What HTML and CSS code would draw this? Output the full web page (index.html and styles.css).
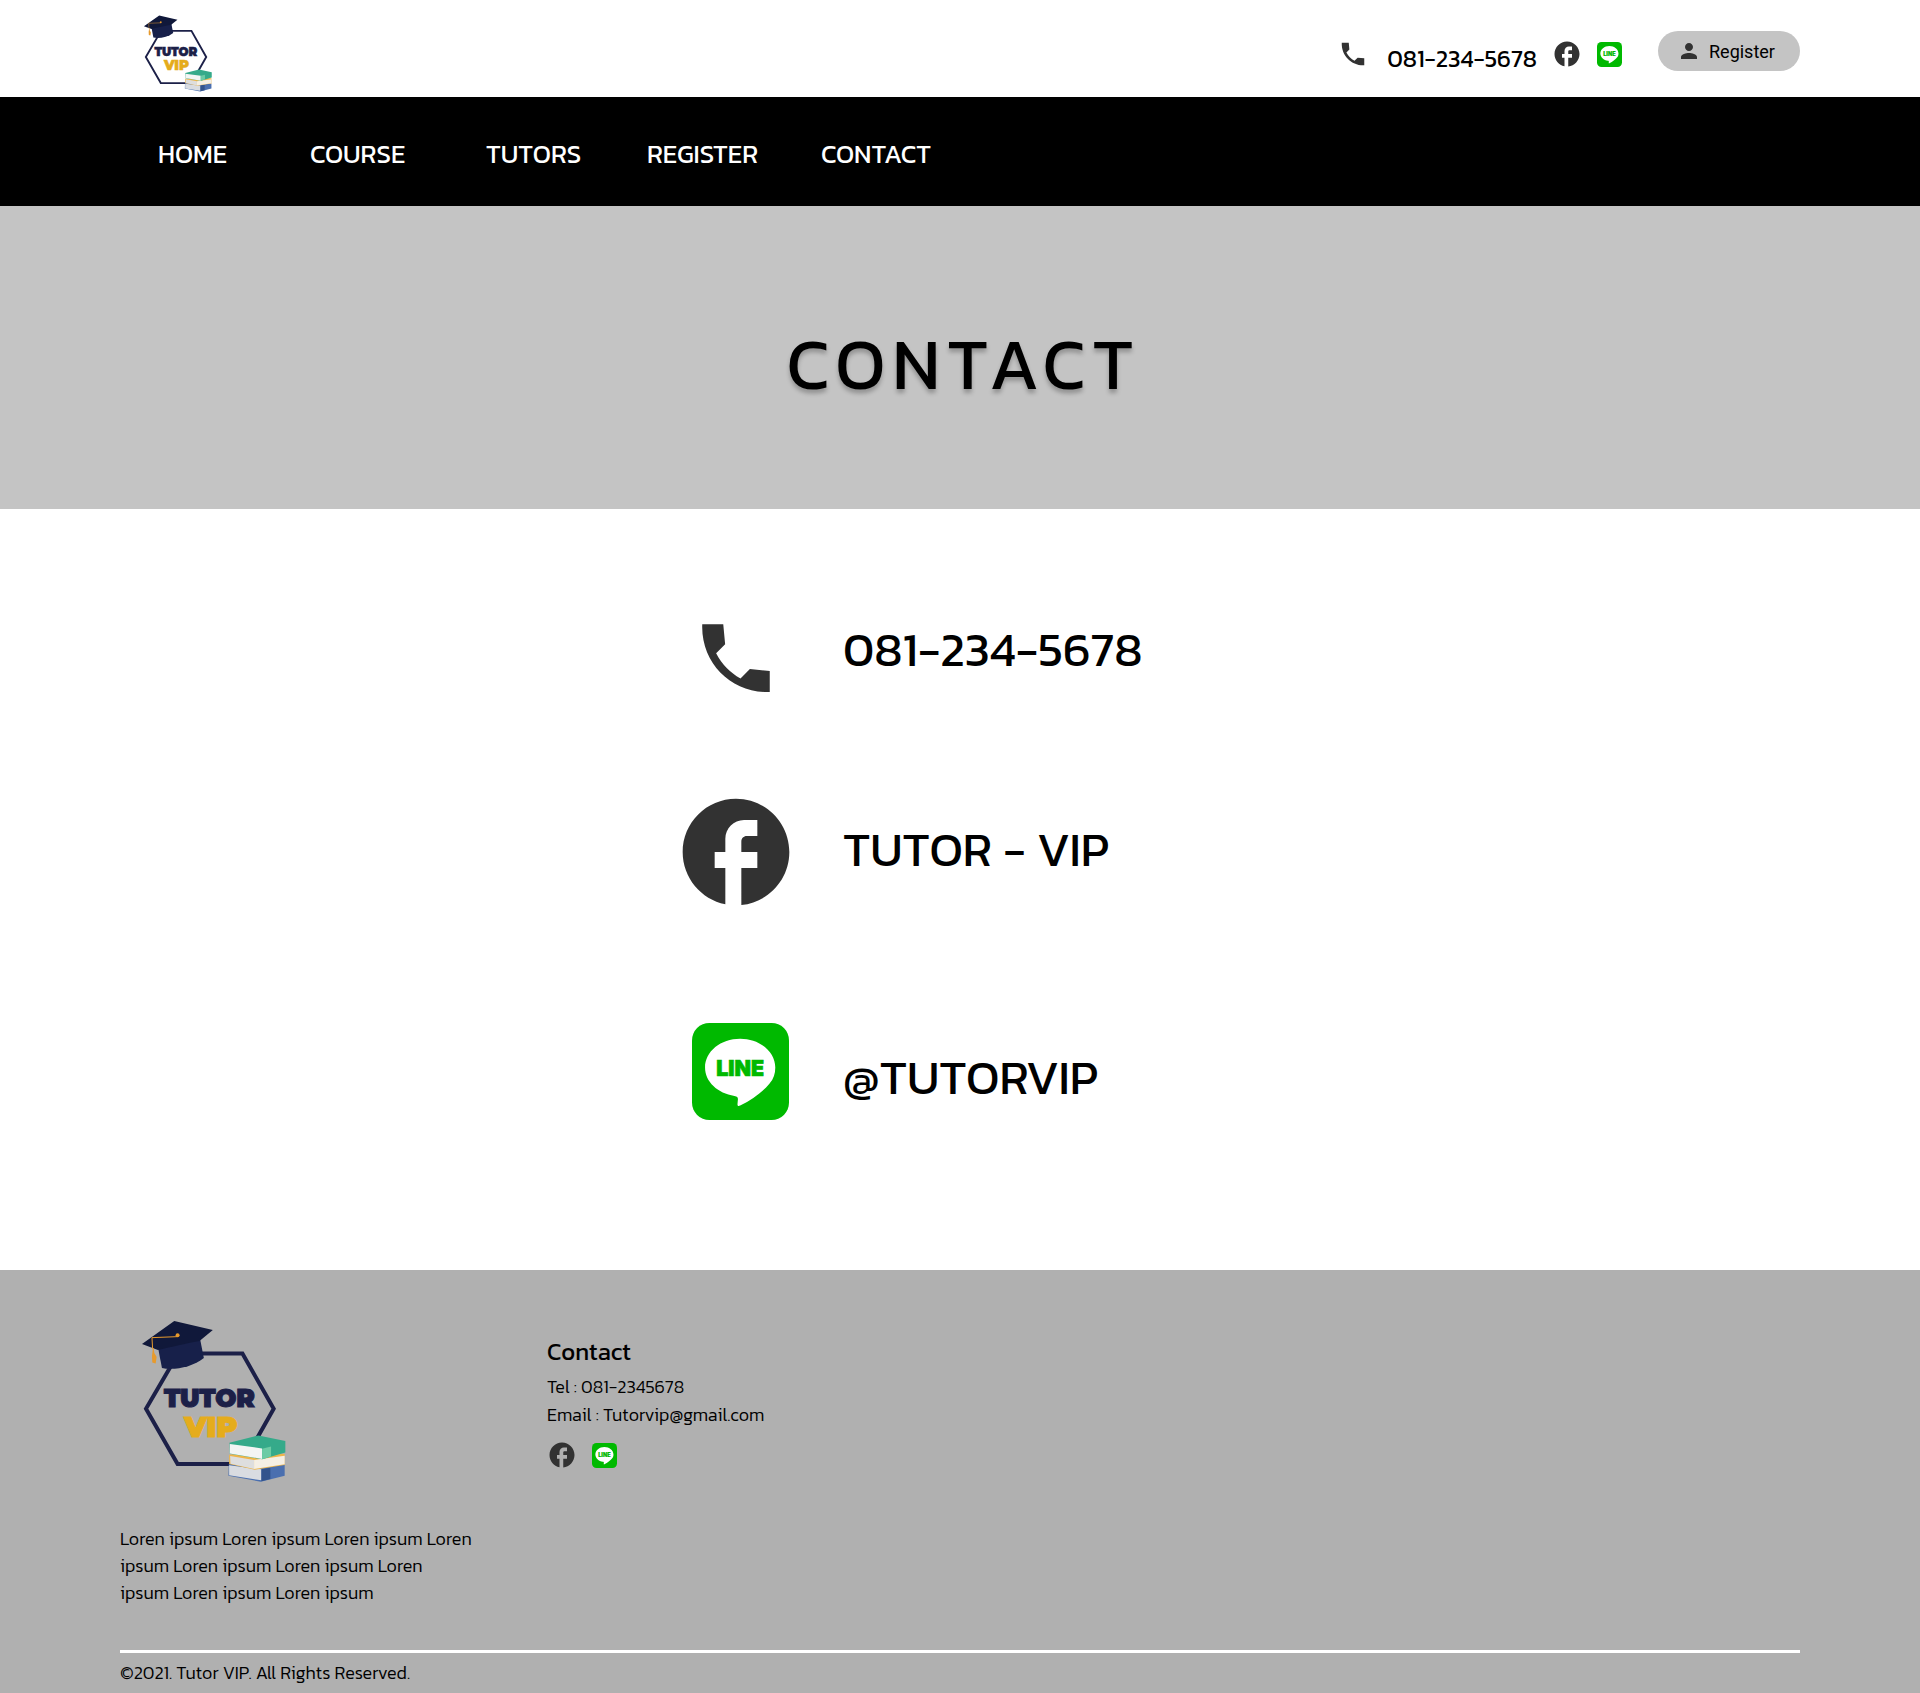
FILE: index.html
```html
<!DOCTYPE html>
<html lang="en">
<head>
<meta charset="utf-8">
<meta name="viewport" content="width=device-width, initial-scale=1">
<title>Tutor VIP - Contact</title>
<link rel="stylesheet" href="styles.css">
</head>
<body>
<svg class="sprite" aria-hidden="true">
  <symbol id="phone" viewBox="0 0 24 24">
    <path d="M3 3h5.600l.5 5.350-2.400 2.400c1.500 2.900 3.700 5.200 6.500 6.700l2.500-2.500 5.300.5v5.600C11 21.500 2.600 13.500 3 3z"/>
  </symbol>
  <symbol id="facebook" viewBox="0 0 24 24">
    <path d="M22 12c0-5.520-4.480-10-10-10S2 6.480 2 12c0 4.840 3.440 8.870 8 9.800V15H8v-3h2V9.500C10 7.570 11.570 6 13.500 6H16v3h-2c-.55 0-1 .45-1 1v2h3v3h-3v6.950c5.050-.5 9-4.760 9-9.950z"/>
  </symbol>
  <symbol id="person" viewBox="0 0 24 24">
    <path d="M12 12c2.210 0 4-1.790 4-4s-1.790-4-4-4-4 1.790-4 4 1.790 4 4 4zm0 2c-2.670 0-8 1.340-8 4v2h16v-2c0-2.660-5.330-4-8-4z"/>
  </symbol>
  <symbol id="line" viewBox="0 0 290 290">
    <rect width="290" height="290" rx="52" fill="#00b900"/>
    <path d="M144 47C86 47 39 85 39 133c0 43 38 77 88 85 10 2 11 5 10 13l-1 12c0 5 2 7 8 4 38-19 68-42 88-66 12-14 17-30 17-48 0-48-47-86-105-86z" fill="#fff"/>
    <text x="144" y="159" text-anchor="middle" class="line-word">LINE</text>
  </symbol>
  <symbol id="logo" viewBox="60 175 445 500">
    <path d="M175 281H368L462 447 368 613H173L78 447z" fill="none" stroke="#1c2048" stroke-width="12"/>
    <path d="M114 262l12 62c34 8 92-2 126-30l-12-60z" fill="#17204a"/>
    <path d="M66 252l97-69 116 27-40 33c-46 8-80 17-125 27z" fill="#10183a"/>
    <path d="M172 230l-76 3 2 34" fill="none" stroke="#e79a2c" stroke-width="3"/>
    <circle cx="173" cy="226" r="6" fill="#e79a2c"/>
    <path d="M99 264l-3 24 1 20 10 3 3-20-7-12-2-15z" fill="#e79a2c"/>
    <text x="269" y="441" text-anchor="middle" class="logo-word logo-word-top">TUTOR</text>
    <text x="273" y="531" text-anchor="middle" class="logo-word logo-word-bottom">VIP</text>
    <path d="M327 614l68-12 100 14v32l-72 18-97-18z" fill="#4a6faf"/>
    <path d="M328 617l97 12v33l-97-15z" fill="#d9dce1"/>
    <path d="M425 629l27-5v34l-27 7z" fill="#32538c"/>
    <path d="M328 585l75-8 92 6v33l-90 14-77-17z" fill="#edb54a"/>
    <path d="M331 589l72 12v27l-71-16z" fill="#dedede"/>
    <path d="M403 601l92-13v26l-92 14z" fill="#f5efe4"/>
    <path d="M329 549l87-22 81 17v34l-70 21-97-17z" fill="#35aa8a"/>
    <path d="M330 553l97 13v32l-97-17z" fill="#f3f5f4"/>
    <path d="M427 567l27-7v30l-27 9z" fill="#6dcba5"/>
  </symbol>
</svg>

<header class="topbar">
  <a class="topbar-logo" href="#" aria-label="Tutor VIP"><svg class="logo logo-small"><use href="#logo"/></svg></a>
  <div class="topbar-tools">
    <a class="topbar-phone" href="tel:0812345678"><svg class="icon"><use href="#phone"/></svg><span class="topbar-number">081-234-5678</span></a>
    <a class="social" href="#" aria-label="Facebook"><svg class="icon"><use href="#facebook"/></svg></a>
    <a class="social" href="#" aria-label="LINE"><svg class="icon-line"><use href="#line"/></svg></a>
  </div>
  <button class="register" type="button"><svg class="icon-person"><use href="#person"/></svg>Register</button>
</header>

<nav class="menu">
  <a href="#">HOME</a>
  <a href="#">COURSE</a>
  <a href="#">TUTORS</a>
  <a href="#">REGISTER</a>
  <a href="#">CONTACT</a>
</nav>

<main>
  <section class="hero"><h1>CONTACT</h1></section>
  <ul class="channels">
    <li class="channel channel-phone"><svg class="channel-icon"><use href="#phone"/></svg><a href="tel:0812345678">081-234-5678</a></li>
    <li class="channel channel-facebook"><svg class="channel-icon"><use href="#facebook"/></svg><a href="#">TUTOR - VIP</a></li>
    <li class="channel channel-line"><svg class="channel-icon"><use href="#line"/></svg><a href="#">@TUTORVIP</a></li>
  </ul>
</main>

<footer class="footer">
  <div class="footer-columns">
    <div class="footer-about">
      <svg class="logo logo-large"><use href="#logo"/></svg>
      <p>Loren ipsum Loren ipsum Loren ipsum Loren<br>ipsum Loren ipsum Loren ipsum Loren<br>ipsum Loren ipsum Loren ipsum</p>
    </div>
    <div class="footer-contact">
      <h2>Contact</h2>
      <p>Tel : 081-2345678</p>
      <p>Email : Tutorvip@gmail.com</p>
      <div class="footer-social">
        <a class="social" href="#" aria-label="Facebook"><svg class="icon"><use href="#facebook"/></svg></a>
        <a class="social" href="#" aria-label="LINE"><svg class="icon-line"><use href="#line"/></svg></a>
      </div>
    </div>
  </div>
  <p class="copyright">©2021. Tutor VIP. All Rights Reserved.</p>
</footer>
</body>
</html>
```
FILE: styles.css
```css
* {
  box-sizing: border-box;
}

body {
  margin: 0;
  background: #fff;
  color: #000;
  font-family: Kanit, Inter, "Noto Sans", sans-serif;
  font-size: 18px;
}

a {
  color: inherit;
  text-decoration: none;
}

svg {
  display: block;
  flex: none;
  fill: #323232;
}

h1,
h2,
p,
ul {
  margin: 0;
  padding: 0;
}

.sprite {
  display: none;
}

.line-word {
  font: 900 64px Inter, sans-serif;
  fill: #00b900;
  stroke: #00b900;
  stroke-width: 2px;
}

.logo-word {
  font-family: Montserrat, Inter, sans-serif;
  font-weight: 900;
  stroke-width: 3px;
}

.logo-word-top {
  font-size: 75px;
  fill: #1c2048;
  stroke: #1c2048;
}

.logo-word-bottom {
  font-size: 86px;
  fill: #e5ac1c;
  stroke: #e5ac1c;
}

.logo-small {
  width: 70px;
  height: 79px;
}

.logo-large {
  width: 148px;
  height: 167px;
  margin-left: 20px;
}

.icon {
  width: 30px;
  height: 30px;
}

.icon-line {
  width: 25px;
  height: 25px;
}

.icon-person {
  width: 24px;
  height: 24px;
}

/* Top bar */
.topbar {
  display: flex;
  align-items: center;
  min-height: 97px;
  padding: 0 120px;
}

.topbar-logo {
  margin: 10px auto 0 23px;
}

.topbar-tools {
  display: flex;
  align-items: center;
  gap: 15px;
  margin: 11px 36px 0 0;
}

.topbar-phone {
  display: flex;
  align-items: center;
  gap: 19px;
  height: 30px;
}

.topbar-number {
  padding-top: 10px;
  font-size: 24px;
  line-height: 28px;
}

.register {
  display: flex;
  align-items: center;
  gap: 8px;
  width: 142px;
  height: 40px;
  margin-top: 5px;
  padding: 0 19px;
  border: 0;
  border-radius: 20px;
  background: #c4c4c4;
  color: #000;
  font: 18px Roboto, sans-serif;
}

/* Main menu */
.menu {
  display: grid;
  grid-template-columns: 152px 176px 161px 174px auto;
  align-items: center;
  min-height: 109px;
  padding: 4px 120px 0 158px;
  background: #000;
  color: #fff;
  font-size: 26px;
  line-height: 32px;
}

/* Page title */
.hero {
  display: flex;
  align-items: center;
  justify-content: center;
  min-height: 303px;
  padding: 12px 0 0 7px;
  background: #c4c4c4;
}

.hero h1 {
  font-size: 72px;
  font-weight: 400;
  letter-spacing: 7px;
  line-height: 96px;
  text-shadow: 0 4px 4px rgba(0, 0, 0, 0.25);
}

/* Contact channels */
.channels {
  padding: 104px 0 150px 35%;
  list-style: none;
}

.channel {
  display: grid;
  grid-template-columns: 128px auto;
  column-gap: 43px;
  align-items: center;
  justify-content: start;
  font-size: 48px;
  line-height: 72px;
}

.channel a {
  padding-bottom: 7px;
}

.channel-icon {
  justify-self: center;
}

.channel-phone {
  align-items: start;
}

.channel-phone .channel-icon {
  width: 90px;
  height: 90px;
}

.channel-facebook {
  margin: 85px 0 107px;
}

.channel-facebook .channel-icon {
  width: 128px;
  height: 128px;
}

.channel-line {
  align-items: end;
}

.channel-line .channel-icon {
  width: 97px;
  height: 97px;
  margin-left: 8px;
}

/* Footer */
.footer {
  padding: 48px 120px 6px;
  background: #b0b0b0;
  font-weight: 300;
  line-height: 28px;
}

.footer-columns {
  display: grid;
  grid-template-columns: 427px auto;
  padding-bottom: 44px;
  border-bottom: 3px solid #fff;
}

.footer-about p {
  padding-top: 40px;
  line-height: 27px;
}

.footer-contact {
  padding-top: 18px;
}

.footer-contact h2 {
  padding-bottom: 5px;
  font-size: 24px;
  font-weight: 400;
  line-height: 32px;
}

.footer-social {
  display: flex;
  align-items: center;
  gap: 15px;
  padding-top: 11px;
}

.copyright {
  padding-top: 6px;
}
```
